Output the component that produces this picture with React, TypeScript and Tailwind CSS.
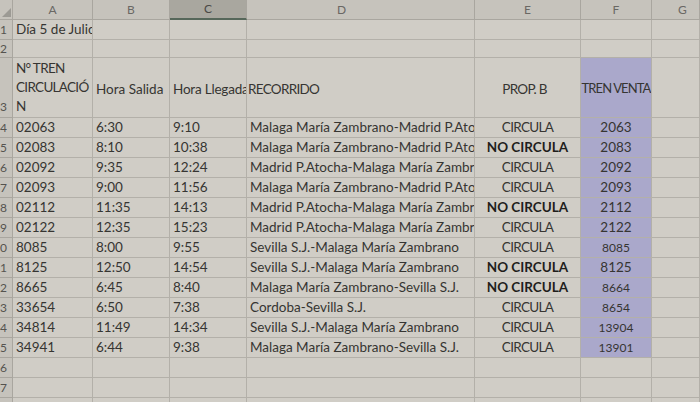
import React from "react";

type Row = {
    n: number
    tren: string
    salida: string
    llegada: string
    recorrido: string
    prop: string
    venta: string
    small?: boolean
}

const rows: Row[] = [
    { n: 4, tren: "02063", salida: "6:30", llegada: "9:10", recorrido: "Malaga María Zambrano-Madrid P.Atocha", prop: "CIRCULA", venta: "2063" },
    { n: 5, tren: "02083", salida: "8:10", llegada: "10:38", recorrido: "Malaga María Zambrano-Madrid P.Atocha", prop: "NO CIRCULA", venta: "2083" },
    { n: 6, tren: "02092", salida: "9:35", llegada: "12:24", recorrido: "Madrid P.Atocha-Malaga María Zambrano", prop: "CIRCULA", venta: "2092" },
    { n: 7, tren: "02093", salida: "9:00", llegada: "11:56", recorrido: "Malaga María Zambrano-Madrid P.Atocha", prop: "CIRCULA", venta: "2093" },
    { n: 8, tren: "02112", salida: "11:35", llegada: "14:13", recorrido: "Madrid P.Atocha-Malaga María Zambrano", prop: "NO CIRCULA", venta: "2112" },
    { n: 9, tren: "02122", salida: "12:35", llegada: "15:23", recorrido: "Madrid P.Atocha-Malaga María Zambrano", prop: "CIRCULA", venta: "2122" },
    { n: 10, tren: "8085", salida: "8:00", llegada: "9:55", recorrido: "Sevilla S.J.-Malaga María Zambrano", prop: "CIRCULA", venta: "8085", small: true },
    { n: 11, tren: "8125", salida: "12:50", llegada: "14:54", recorrido: "Sevilla S.J.-Malaga María Zambrano", prop: "NO CIRCULA", venta: "8125" },
    { n: 12, tren: "8665", salida: "6:45", llegada: "8:40", recorrido: "Malaga María Zambrano-Sevilla S.J.", prop: "NO CIRCULA", venta: "8664", small: true },
    { n: 13, tren: "33654", salida: "6:50", llegada: "7:38", recorrido: "Cordoba-Sevilla S.J.", prop: "CIRCULA", venta: "8654", small: true },
    { n: 14, tren: "34814", salida: "11:49", llegada: "14:34", recorrido: "Sevilla S.J.-Malaga María Zambrano", prop: "CIRCULA", venta: "13904", small: true },
    { n: 15, tren: "34941", salida: "6:44", llegada: "9:38", recorrido: "Malaga María Zambrano-Sevilla S.J.", prop: "CIRCULA", venta: "13901", small: true },
]

const cell = "border-r border-b border-[#b3b0a9] overflow-hidden whitespace-nowrap flex items-center"
const rowHead = "border-r border-b border-[#a9a69f] bg-[#c6c3bc] text-[#55534f] text-[12px] flex items-center justify-end pr-[5px] overflow-hidden"
const colHead = "border-r border-b border-[#a9a69f] bg-[#c6c3bc] text-[#6a6864] text-[12px] flex items-center justify-center"
const blue = "bg-[#aaa8cb]"
const caps = "tracking-[-0.7px]"

function EmptyRow({ n }: { n: number }) {
    return (
        <>
            <div className={rowHead}>{n}</div>
            <div className={cell} />
            <div className={cell} />
            <div className={cell} />
            <div className={cell} />
            <div className={cell} />
            <div className={cell} />
            <div className={cell} />
        </>
    )
}

export default function App() {
    return (
        <div
            className="w-[700px] h-[402px] overflow-hidden bg-[#d0cdc6] text-[#363532] text-[13.5px]"
            style={{ fontFamily: "Lato, 'Open Sans', sans-serif" }}
        >
            <div className="grid grid-cols-[13px_80px_77px_77px_228px_106px_71px_1fr] grid-rows-[20px_20px_18px_60px_repeat(15,20px)]">
                {/* COLUMN HEADERS */}
                <div className={`${colHead} relative`}>
                    <div className="absolute right-[1px] bottom-[2px] w-0 h-0 border-l-[9px] border-l-transparent border-b-[9px] border-b-[#9c9a94]" />
                </div>
                <div className={colHead}>A</div>
                <div className={colHead}>B</div>
                <div className="border-r border-[#a9a69f] border-b-2 border-b-[#56675a] bg-[#a9a79f] text-[#4a4946] text-[12px] flex items-center justify-center">C</div>
                <div className={`${colHead} justify-start pl-[90px]`}>D</div>
                <div className={colHead}>E</div>
                <div className={colHead}>F</div>
                <div className={`${colHead} justify-start pl-[26px]`}>G</div>

                {/* ROW 1 */}
                <div className={rowHead}>1</div>
                <div className={`${cell} pl-[3px]`}>Día 5 de Julio</div>
                <div className={cell} />
                <div className={cell} />
                <div className={cell} />
                <div className={cell} />
                <div className={cell} />
                <div className={cell} />

                {/* ROW 2 */}
                <EmptyRow n={2} />

                {/* ROW 3 */}
                <div className={`${rowHead} items-end pb-[1px]`}>3</div>
                <div className={`${cell} ${caps} pl-[3px] flex-col items-start justify-center leading-[19px]`}>
                    <span>N° TREN</span>
                    <span>CIRCULACIÓ</span>
                    <span>N</span>
                </div>
                <div className={`${cell} pl-[3px] pt-[3px]`}>Hora Salida</div>
                <div className={`${cell} pl-[3px] pt-[3px] tracking-[-0.2px]`}>Hora Llegada</div>
                <div className={`${cell} ${caps} pl-[1px] pt-[3px]`}>RECORRIDO</div>
                <div className={`${cell} ${caps} justify-center pt-[3px] pr-[6px]`}>PROP. B</div>
                <div className={`${cell} ${blue} justify-center pt-[3px] text-[13px] tracking-[-0.9px]`}>TREN VENTA</div>
                <div className={cell} />

                {/* DATA */}
                {rows.map((r) => (
                    <React.Fragment key={r.n}>
                        <div className={rowHead}>{r.n}</div>
                        <div className={`${cell} pl-[3px]`}>{r.tren}</div>
                        <div className={`${cell} pl-[3px]`}>{r.salida}</div>
                        <div className={`${cell} pl-[3px]`}>{r.llegada}</div>
                        <div className={`${cell} pl-[3px]`}>{r.recorrido}</div>
                        <div className={`${cell} justify-center ${r.prop === "NO CIRCULA" ? "font-bold text-[#1f1e1c]" : caps}`}>{r.prop}</div>
                        <div className={`${cell} ${blue} justify-center ${r.small ? "text-[12px]" : ""}`}>{r.venta}</div>
                        <div className={cell} />
                    </React.Fragment>
                ))}

                <EmptyRow n={16} />
                <EmptyRow n={17} />
                <EmptyRow n={18} />
            </div>
        </div>
    )
}
